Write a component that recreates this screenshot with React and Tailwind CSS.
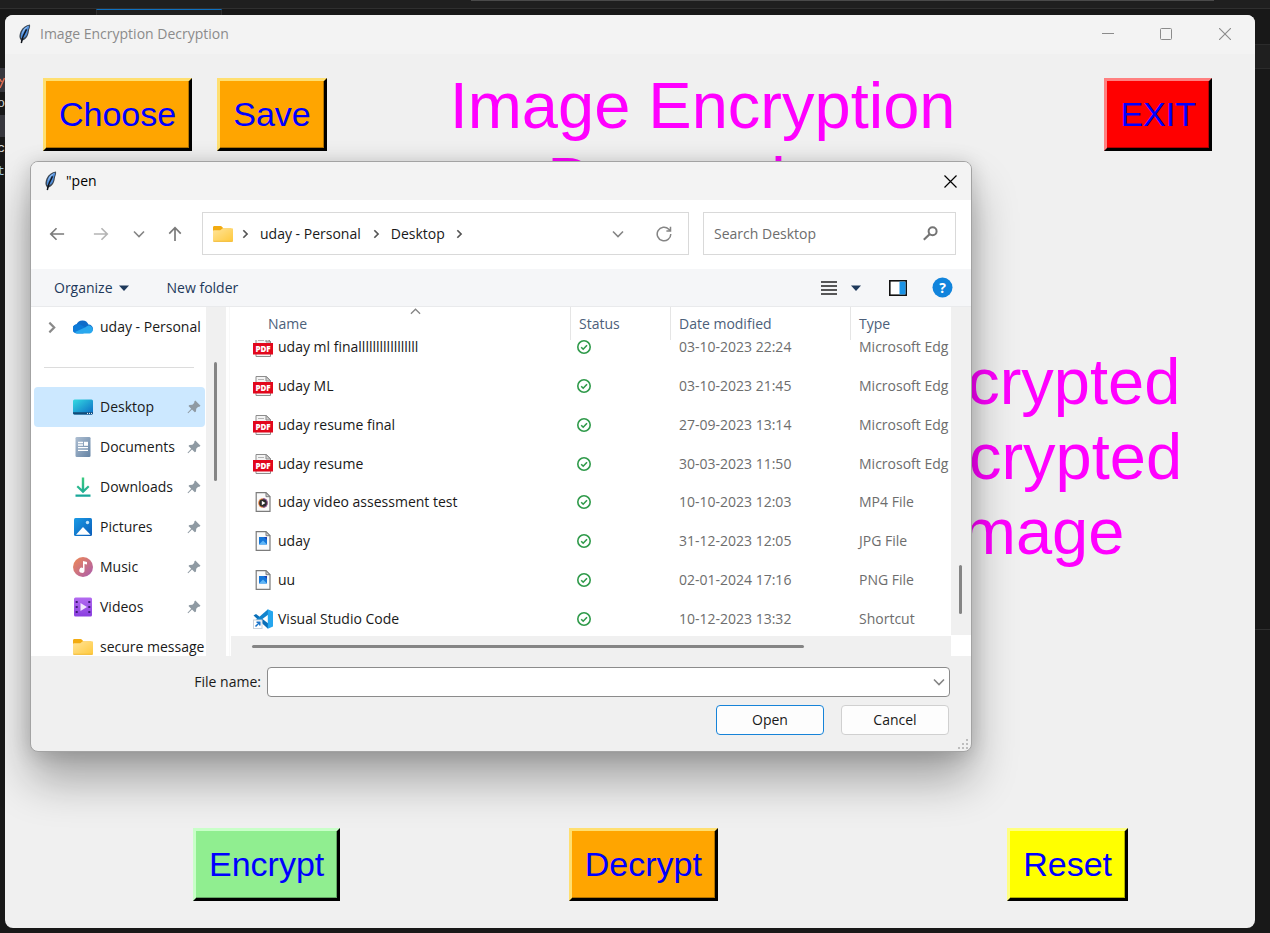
import React from "react";

function Feather() {
  return (
    <svg width="14" height="20" viewBox="0 0 14 20" aria-hidden="true">
      <path d="M12 .6C8 1.200 4.300 3.600 2.600 7.400c-1 2.500-1.500 5-.8 6.900L3 16.500 3.200 19.500l1-2.900c2.400-.7 4-2.200 5.200-4.300.9-1.700 1.200-3.200 1.400-4.800C11.200 5 12.600 3 12 .6z" fill="#3b4652" />
      <path d="M11.200 1.500C8 2.400 5 4.600 3.800 7.900c-.8 2.100-1.100 4-.8 5.600L4 14.500c2.300-.7 3.800-1.900 4.700-3.600.9-1.800.9-3.200 1.300-4.800.3-1.200 1.500-3 1.200-4.600z" fill="#4f8edb" />
      <path d="M10.600 1.900C8 3 5.600 4.800 4.600 7.700L3.700 11c1-1.800 2-3.900 3.200-5.400C8 4.200 9.500 3 10.600 1.900z" fill="#a5c9f3" />
      <path d="M8.600 5.400C6.800 8.400 4.600 11.500 3.300 19" stroke="#10141b" strokeWidth="1.500" fill="none" />
    </svg>
  );
}

function Chevron({ dir = "down", size = 12, className = "text-[#858585]", w = 1.6 }) {
  const d = {
    down: "M1 3.500l5 5 5-5",
    up: "M1 8.500l5-5 5 5",
    right: "M4 1.500L8.500 6 4 10.500",
  }[dir];
  return (
    <svg width={size} height={size} viewBox="0 0 12 12" className={className} aria-hidden="true">
      <path d={d} fill="none" stroke="currentColor" strokeWidth={w} />
    </svg>
  );
}

function Arrow({ kind }) {
  const d = {
    back: "M17 9H2M8.500 2.500L2 9l6.500 6.500",
    forward: "M1 9h15M9.500 2.500L16 9l-6.500 6.500",
    up: "M9 17V2M2.500 8.500L9 2l6.500 6.500",
  }[kind];
  return (
    <svg width="16" height="16" viewBox="0 0 18 18" aria-hidden="true">
      <path d={d} fill="none" stroke="currentColor" strokeWidth="1.900" />
    </svg>
  );
}

function Triangle() {
  return (
    <svg width="10" height="6" viewBox="0 0 10 6" aria-hidden="true">
      <path d="M0 .5h10L5 6z" fill="#1e395b" />
    </svg>
  );
}

function Folder() {
  return (
    <svg width="20" height="18" viewBox="0 0 20 18" aria-hidden="true">
      <defs>
        <linearGradient id="fold" x1="0" y1="0" x2="1" y2="1">
          <stop offset="0" stopColor="#ffe49a" />
          <stop offset="1" stopColor="#ffc93c" />
        </linearGradient>
      </defs>
      <path d="M0 2.500C0 1.500.6 1 1.500 1h6c.7 0 1 .2 1.500.8L10.500 3.500H18v3H0z" fill="#f2ab11" />
      <path d="M0 6.500c0-.8.500-1.200 1.200-1.200h6L9.800 3.300h9c.7 0 1.200.500 1.200 1.200V15.600c0 .8-.5 1.200-1.200 1.200H1.200C.5 16.800 0 16.400 0 15.600z" fill="url(#fold)" />
      <path d="M.3 16.300h19.400" stroke="#f0b429" strokeWidth=".8" />
    </svg>
  );
}

function Cloud() {
  return (
    <svg width="20" height="14" viewBox="0 0 20 14" aria-hidden="true">
      <path d="M4.500 13A4.400 4.400 0 0 1 3.500 4.300 6.500 6.500 0 0 1 15.500 4.600a4.200 4.200 0 0 1 .5 8.400z" fill="#0f6cc9" />
      <path d="M3.500 4.400c2-.6 4 0 5.500 1L17 10 10 13.500H4.500A4.500 4.500 0 0 1 3.500 4.400z" fill="#0c7ad8" />
      <path d="M2 12L12.500 7.200c2-1.500 4-2.200 5.500-.9 2.800 2 2.400 6.400-1.300 7.200H4.500C3.500 13.500 2.500 12.800 2 12z" fill="#29a8ee" />
    </svg>
  );
}

function DesktopIcon() {
  return (
    <svg width="20" height="16" viewBox="0 0 20 16" aria-hidden="true">
      <defs>
        <linearGradient id="desk" x1="0" y1="0" x2="1" y2="1">
          <stop offset="0" stopColor="#34dbe2" />
          <stop offset="1" stopColor="#0b69c4" />
        </linearGradient>
      </defs>
      <rect y=".5" width="20" height="15" rx="1.500" fill="url(#desk)" />
      <path d="M0 13.300h20v.8c0 .8-.6 1.400-1.400 1.400H1.400C.6 15.500 0 14.900 0 14.100z" fill="#134a76" />
      <path d="M14 14.400h1M16 14.400h1M18 14.400h1" stroke="#fff" strokeWidth="1" />
    </svg>
  );
}

function DocumentsIcon() {
  return (
    <svg width="20" height="20" viewBox="0 0 20 20" aria-hidden="true">
      <defs>
        <linearGradient id="docs" x1="0" y1="0" x2="1" y2="1">
          <stop offset="0" stopColor="#aebfd2" />
          <stop offset="1" stopColor="#6483a4" />
        </linearGradient>
      </defs>
      <rect x="2.500" width="15" height="20" rx="1.300" fill="url(#docs)" />
      <path d="M5 5.500h5M5 8h5M5 10.700h10M5 13.300h10" stroke="#fff" strokeWidth="1.300" />
      <rect x="11" y="4.800" width="4" height="4" fill="#fff" />
    </svg>
  );
}

function DownloadsIcon() {
  return (
    <svg width="20" height="20" viewBox="0 0 20 20" aria-hidden="true">
      <defs>
        <linearGradient id="down" x1="0" y1="0" x2="0" y2="1">
          <stop offset="0" stopColor="#3ccb80" />
          <stop offset="1" stopColor="#17a59b" />
        </linearGradient>
      </defs>
      <path d="M8.800.500h2.400v11.500l3.800-3.500L16.500 10 10 16.300 3.500 10 5 8.500l3.800 3.500zM2.500 17.600h15v2.200h-15z" fill="url(#down)" />
    </svg>
  );
}

function PicturesIcon() {
  return (
    <svg width="20" height="20" viewBox="0 0 20 20" aria-hidden="true">
      <defs>
        <linearGradient id="pics" x1="0" y1="0" x2="1" y2="1">
          <stop offset="0" stopColor="#1a9be6" />
          <stop offset="1" stopColor="#0a5cb8" />
        </linearGradient>
      </defs>
      <rect x="1" y="1" width="18" height="18" rx="1.500" fill="url(#pics)" />
      <path d="M3 17.700L10 10l7.500 7.700z" fill="#fff" />
      <circle cx="14.500" cy="5.500" r="1.700" fill="#bfe3fb" />
    </svg>
  );
}

function MusicIcon() {
  return (
    <svg width="20" height="20" viewBox="0 0 20 20" aria-hidden="true">
      <defs>
        <linearGradient id="mus" x1="0" y1="0" x2="1" y2="1">
          <stop offset="0" stopColor="#f08a52" />
          <stop offset="1" stopColor="#a95bb0" />
        </linearGradient>
      </defs>
      <circle cx="10" cy="10" r="10" fill="url(#mus)" />
      <path d="M10 4l4 .9v2.600l-2.500-.6v6.300a2.600 2.600 0 1 1-1.500-2.300z" fill="#fff" />
    </svg>
  );
}

function VideosIcon() {
  return (
    <svg width="20" height="20" viewBox="0 0 20 20" aria-hidden="true">
      <defs>
        <linearGradient id="vid" x1="0" y1="0" x2="0" y2="1">
          <stop offset="0" stopColor="#b36bf0" />
          <stop offset="1" stopColor="#8a3fe0" />
        </linearGradient>
      </defs>
      <rect x="1" y=".5" width="18" height="19" rx="1.500" fill="url(#vid)" />
      <path d="M2.700 4h2v2h-2zM2.700 9h2v2h-2zM2.700 14h2v2h-2zM15.300 4h2v2h-2zM15.300 9h2v2h-2zM15.300 14h2v2h-2z" fill="#3c1a78" />
      <path d="M7.500 6l6.500 4-6.500 4z" fill="#f1e6fd" />
    </svg>
  );
}

function Pin() {
  return (
    <svg width="14" height="14" viewBox="0 0 14 14" aria-hidden="true">
      <path d="M8.300.5L13.500 5.700 12 7 11.200 6.700 9.200 8.700 9 11.600 7.800 12.300 5 9.500 1.200 13.200.5 12.700 4.200 8.700 1.500 6 2.400 4.900 5.400 4.700 7.400 2.800 7 1.900z" fill="#8f9aa3" />
    </svg>
  );
}

function PdfIcon() {
  return (
    <svg width="20" height="20" viewBox="0 0 20 20" aria-hidden="true">
      <path d="M3 .5h10.500L17.500 4.500v15H3z" fill="#f4f4f4" stroke="#8d8d8d" />
      <path d="M5 3.500h6" stroke="#b5b5b5" />
      <path d="M13 .5v4.500h4.500z" fill="#d5d5d5" stroke="#8d8d8d" />
      <rect y="6" width="20" height="11.500" fill="#e2071c" />
      <text x="10" y="14.600" textAnchor="middle" fontFamily="Open Sans, sans-serif" fontSize="8" fontWeight="800" fill="#fff">PDF</text>
    </svg>
  );
}

function FileSheet({ children }) {
  return (
    <svg width="20" height="20" viewBox="0 0 20 20" aria-hidden="true">
      <path d="M3.200.7H13L17 4.700V19.300H3.200z" fill="#fafafa" stroke="#7c7c7c" strokeWidth="1.200" />
      <path d="M13 .7v4h4z" fill="#d0d0d0" stroke="#7c7c7c" />
      {children}
    </svg>
  );
}

function VideoFileIcon() {
  return (
    <FileSheet>
      <circle cx="10" cy="11" r="4.800" fill="#e8803f" />
      <path d="M10 6.200a4.800 4.800 0 0 1 0 9.600z" fill="#8658a5" />
      <circle cx="10" cy="11" r="3.800" fill="#2b2b2b" />
      <path d="M8.800 8.800l3.600 2.200-3.600 2.200z" fill="#fff" />
    </FileSheet>
  );
}

function ImageFileIcon() {
  return (
    <FileSheet>
      <rect x="6" y="6" width="8" height="7.500" fill="#1677d8" />
      <path d="M6 13.500l4-4 4 4z" fill="#5fb6f7" />
      <path d="M11 6h3v3z" fill="#1d3fb5" />
    </FileSheet>
  );
}

function CodeIcon() {
  return (
    <svg width="20" height="20" viewBox="0 0 20 20" aria-hidden="true">
      <path d="M.5 6.600L3 4.900 15 14.200V19.700z" fill="#0a6fb8" />
      <path d="M.5 13L2.800 15 15 5.800V.3z" fill="#1183cd" />
      <path d="M14.800.2L20 2.400V17.600L14.800 19.800z" fill="#25a6ee" />
      <rect x=".5" y="11" width="8.500" height="8.500" fill="#fff" stroke="#c8d2dc" />
      <path d="M2.500 17.500L6.300 13.700M3.500 13.200h3.300v3.300" fill="none" stroke="#1b74c9" strokeWidth="1.500" />
    </svg>
  );
}

function StatusIcon() {
  return (
    <svg width="14" height="14" viewBox="0 0 14 14" role="img" aria-label="Synced">
      <circle cx="7" cy="7" r="6.200" fill="#fff" stroke="#2f9a4a" strokeWidth="1.600" />
      <path d="M4.200 7.200l2 2L10 5.300" fill="none" stroke="#2f9a4a" strokeWidth="1.600" />
    </svg>
  );
}

function Raised({ children, className }) {
  return (
    <button
      type="button"
      className={
        "h-[73px] border-[3px] border-r-black border-b-black px-[13px] pb-[2px] font-['Liberation_Sans',sans-serif] text-[34px] leading-[40px] whitespace-nowrap text-[#0000ff] shadow-[inset_-1px_-1px_0_rgba(0,0,0,0.3)] " +
        className
      }
    >
      {children}
    </button>
  );
}

const orange = "border-t-[#ffdf70] border-l-[#ffdf70] bg-[#ffa500]";

const places = [
  ["Desktop", DesktopIcon],
  ["Documents", DocumentsIcon],
  ["Downloads", DownloadsIcon],
  ["Pictures", PicturesIcon],
  ["Music", MusicIcon],
  ["Videos", VideosIcon],
  ["secure message", Folder],
];

const files = [
  ["uday ml finalllllllllllllllll", PdfIcon, "03-10-2023 22:24", "Microsoft Edg"],
  ["uday ML", PdfIcon, "03-10-2023 21:45", "Microsoft Edg"],
  ["uday resume final", PdfIcon, "27-09-2023 13:14", "Microsoft Edg"],
  ["uday resume", PdfIcon, "30-03-2023 11:50", "Microsoft Edg"],
  ["uday video assessment test", VideoFileIcon, "10-10-2023 12:03", "MP4 File"],
  ["uday", ImageFileIcon, "31-12-2023 12:05", "JPG File"],
  ["uu", ImageFileIcon, "02-01-2024 17:16", "PNG File"],
  ["Visual Studio Code", CodeIcon, "10-12-2023 13:32", "Shortcut"],
];

const cols = "grid-cols-[340px_100px_180px_1fr]";

function Sidebar() {
  return (
    <nav aria-label="Places" className="flex w-[200px] shrink-0 overflow-hidden">
      <ul className="w-[175px] overflow-hidden pl-[3px]">
        <li className="flex h-10 items-center">
          <button type="button" aria-label="Expand" className="ml-[11px] flex w-7">
            <Chevron dir="right" size={13} w={2} className="text-[#8a8a8a]" />
          </button>
          <a href="#personal" className="flex items-center gap-[7px] whitespace-nowrap">
            <Cloud />
            uday - Personal
          </a>
        </li>
        <li className="flex h-10 items-center pr-3 pl-[10px]">
          <span className="h-px w-full bg-[#dcdcdc]" />
        </li>
        {places.map(([name, Icon], i) => (
          <li
            key={name}
            className={"mr-px flex h-10 items-center rounded-sm pr-1 pl-[39px] " + (i === 0 ? "bg-[#cce8ff]" : "")}
          >
            <a href="#place" className="flex flex-1 items-center gap-[7px] whitespace-nowrap">
              <Icon />
              {name}
            </a>
            {i < 6 && <Pin />}
          </li>
        ))}
      </ul>
      <div className="w-5 bg-[#f0f0f0] pt-[55px]">
        <div className="ml-2 h-[119px] w-[3px] rounded-full bg-[#858585]" />
      </div>
      <div className="ml-[3px] w-px bg-[#f8f8f8]" />
    </nav>
  );
}

function FileList() {
  return (
    <div className="flex min-w-0 flex-1 bg-white">
      <div className="flex min-w-0 flex-1 flex-col">
        <div className="flex-1 overflow-hidden">
          <table className="block">
            <thead className="relative z-10 block bg-white text-[#4c607a]">
              <tr className={"grid h-[33px] " + cols}>
                <th className="relative flex items-center border-r border-[#e5e5e5] pl-[37px] font-normal">
                  Name
                  <span className="absolute -top-px left-[179px]">
                    <Chevron dir="up" size={11} w={1.4} />
                  </span>
                </th>
                <th className="flex items-center border-r border-[#e5e5e5] pl-2 font-normal">Status</th>
                <th className="flex items-center border-r border-[#e5e5e5] pl-2 font-normal">Date modified</th>
                <th className="flex items-center pl-2 font-normal">Type</th>
              </tr>
            </thead>
            <tbody className="-mt-3 grid h-[310px] auto-rows-fr">
              {files.map(([name, Icon, date, type]) => (
                <tr key={name} className={"grid " + cols}>
                  <td className="flex items-center gap-[5px] pl-[22px] whitespace-nowrap">
                    <Icon />
                    {name}
                  </td>
                  <td className="flex items-center pl-[6px]">
                    <StatusIcon />
                  </td>
                  <td className="flex items-center pl-2 text-[#6d6d6d]">{date}</td>
                  <td className="flex items-center overflow-hidden pl-2 whitespace-nowrap text-[#6d6d6d]">{type}</td>
                </tr>
              ))}
            </tbody>
          </table>
        </div>
        <div className="flex h-5 items-center bg-[#f0f0f0] pl-[21px]">
          <div className="h-[3px] w-[552px] rounded-full bg-[#858585]" />
        </div>
      </div>
      <div className="w-5 pb-[21px]">
        <div className="h-full bg-[#f0f0f0] pt-[258px]">
          <div className="ml-2 h-[49px] w-[3px] rounded-full bg-[#858585]" />
        </div>
      </div>
    </div>
  );
}

function OpenDialog() {
  return (
    <section
      role="dialog"
      aria-label="Open"
      className="absolute top-[161px] left-[30px] z-20 flex w-[942px] flex-col overflow-hidden rounded-lg border border-[#a3a3a3] bg-[#f0f0f0] text-[14px] leading-5 text-[#191919] shadow-[0_28px_46px_rgba(0,0,0,0.32),0_2px_20px_rgba(0,0,0,0.16)]"
    >
      <header className="flex h-[38px] items-center bg-[#f3f3f3] pr-[14px] pl-[13px] text-black">
        <Feather />
        <h2 className="ml-2 flex-1">"pen</h2>
        <button type="button" aria-label="Close">
          <svg width="13" height="13" viewBox="0 0 13 13">
            <path d="M.5.5l12 12M12.500.5l-12 12" stroke="#000" strokeWidth="1.200" />
          </svg>
        </button>
      </header>

      <div className="flex h-[69px] items-center bg-white pr-[15px] pb-[2px] pl-[18px]">
        <button type="button" aria-label="Back" className="text-[#7a7a7a]"><Arrow kind="back" /></button>
        <button type="button" aria-label="Forward" className="ml-7 text-[#b4b4b4]"><Arrow kind="forward" /></button>
        <button type="button" aria-label="Recent locations" className="ml-6"><Chevron size={12} /></button>
        <button type="button" aria-label="Up" className="ml-[22px] text-[#7a7a7a]"><Arrow kind="up" /></button>
        <div className="ml-[19px] flex h-[43px] flex-1 items-center border border-[#d9d9d9] pr-4 pl-[10px]">
          <Folder />
          <Chevron dir="right" size={10} w={2} className="ml-[7px] text-[#555]" />
          <a href="#personal" className="ml-[10px] whitespace-nowrap">uday - Personal</a>
          <Chevron dir="right" size={10} w={2} className="ml-[10px] text-[#555]" />
          <a href="#desktop" className="ml-[10px]">Desktop</a>
          <Chevron dir="right" size={10} w={2} className="ml-[9px] text-[#555]" />
          <button type="button" aria-label="Previous locations" className="ml-auto"><Chevron size={12} /></button>
          <button type="button" aria-label="Refresh" className="ml-8">
            <svg width="16" height="16" viewBox="0 0 16 16">
              <path d="M14.800 8A6.800 6.800 0 1 1 12.800 3.200L14.300 4.700M14.500.8v4.100h-4.100" fill="none" stroke="#858585" strokeWidth="1.500" />
            </svg>
          </button>
        </div>
        <div className="ml-[14px] flex h-[43px] w-[253px] items-center border border-[#d9d9d9] pr-[17px] pl-[10px]">
          <input aria-label="Search Desktop" placeholder="Search Desktop" className="min-w-0 flex-1 outline-none placeholder:text-[#6d6d6d]" />
          <svg width="15" height="15" viewBox="0 0 15 15" aria-hidden="true">
            <circle cx="9.600" cy="5.300" r="4" fill="none" stroke="#747474" strokeWidth="2" />
            <path d="M6.600 8.300L.8 13.800" stroke="#747474" strokeWidth="2.200" />
          </svg>
        </div>
      </div>

      <div className="flex h-[38px] items-center border-b border-[#e9eaec] bg-[#f5f6f8] pr-[18px] pl-[23px] text-[#1e395b]">
        <button type="button" className="flex items-center gap-[6px]">
          Organize
          <Triangle />
        </button>
        <button type="button" className="ml-[38px]">New folder</button>
        <button type="button" aria-label="Change view" className="ml-auto flex items-center gap-[14px]">
          <svg width="16" height="14" viewBox="0 0 16 14">
            <path d="M0 1h16M0 5h16M0 9h16M0 13h16" stroke="#222" strokeWidth="1.400" />
          </svg>
          <Triangle />
        </button>
        <button type="button" aria-label="Preview pane" className="ml-7">
          <svg width="18" height="16" viewBox="0 0 18 16">
            <rect x=".8" y=".8" width="16.400" height="14.400" fill="#fff" stroke="#111" strokeWidth="1.600" />
            <rect x="10.500" y="1.600" width="6" height="12.800" fill="#1a93e6" />
          </svg>
        </button>
        <button type="button" aria-label="Help" className="ml-[25px]">
          <svg width="21" height="21" viewBox="0 0 21 21">
            <circle cx="10.500" cy="10.500" r="10" fill="#1184dc" />
            <text x="10.500" y="15.500" textAnchor="middle" fontFamily="Open Sans, sans-serif" fontSize="14" fontWeight="700" fill="#fff">?</text>
          </svg>
        </button>
      </div>

      <div className="flex h-[349px] bg-white">
        <Sidebar />
        <FileList />
      </div>

      <form className="relative flex flex-col gap-2 pt-[11px] pb-4">
        <div className="flex items-center pr-[21px]">
          <label htmlFor="file-name" className="w-[236px] pr-[6px] text-right">File name:</label>
          <div className="flex h-[30px] flex-1 items-center rounded-sm border border-[#8b8b8b] bg-white pr-1">
            <input id="file-name" className="h-full min-w-0 flex-1 px-2 outline-none" />
            <button type="button" aria-label="Show file names"><Chevron size={12} /></button>
          </div>
        </div>
        <div className="flex justify-end gap-[17px] pr-[22px]">
          <button type="button" className="h-[30px] w-[108px] rounded border border-[#1683d8] bg-[#fdfdfd]">Open</button>
          <button type="button" className="h-[30px] w-[108px] rounded border border-[#d0d0d0] bg-[#fdfdfd]">Cancel</button>
        </div>
        <svg width="10" height="10" viewBox="0 0 10 10" className="absolute right-[3px] bottom-[2px]" aria-hidden="true">
          <path d="M8 0h2v2H8zM8 4h2v2H8zM8 8h2v2H8zM4 4h2v2H4zM4 8h2v2H4zM0 8h2v2H0z" fill="#bdbdbd" />
        </svg>
      </form>
    </section>
  );
}

export default function App() {
  return (
    <div className="relative flex min-h-screen flex-col overflow-hidden bg-[#181818] pt-[15px] pr-[15px] pb-[5px] pl-[5px] font-['Open_Sans','Noto_Sans',sans-serif]">
      <div aria-hidden="true" className="absolute inset-x-0 top-0 h-[9px] border-b border-[#2f2f2f] bg-[#1f1f1f]">
        <div className="ml-[471px] h-px w-[743px] bg-[#4a4a4a]" />
        <div className="absolute top-[9px] left-[96px] h-[6px] w-[126px] border-x border-t border-x-[#2f2f2f] border-t-[#0e70c0] bg-[#1f1f1f]" />
      </div>
      <div aria-hidden="true" className="absolute top-[44px] right-0 h-[25px] w-[15px] border-y border-[#2b2b2b] bg-[#1f1f1f]" />
      <div aria-hidden="true" className="absolute top-[629px] right-0 h-[304px] w-[15px] border-t border-[#2f2f2f]" />
      <div
        aria-hidden="true"
        className="absolute top-[68px] left-0 flex w-[5px] flex-col items-end overflow-hidden font-['Liberation_Mono',monospace] text-[13px] leading-[23px] text-[#d4d4d4]"
      >
        <div className="h-6 w-full bg-[#37373d]">
          <svg width="5" height="24" viewBox="0 0 5 24"><path d="M0 11l1.500 3M0 20L4.500 10" stroke="#e06c50" strokeWidth="1.500" /></svg>
        </div>
        <span>o</span>
        <span className="h-[22px] w-full bg-[#37373d]" />
        <span>c</span>
        <span className="text-[#9cc8e8]">t</span>
      </div>

      <main className="relative flex flex-1 flex-col overflow-hidden rounded-lg bg-[#f0f0f0]">
        <header className="flex h-[39px] shrink-0 items-center bg-[#f3f3f3] pr-6 pb-px pl-[13px] text-[#8b8b8b]">
          <Feather />
          <span className="ml-2 flex-1 text-[14px] leading-5">Image Encryption Decryption</span>
          <button type="button" aria-label="Minimize" className="flex">
            <svg width="12" height="12" viewBox="0 0 12 12"><path d="M0 5.500h12" stroke="currentColor" /></svg>
          </button>
          <button type="button" aria-label="Maximize" className="ml-[46px] flex">
            <svg width="12" height="12" viewBox="0 0 12 12"><rect x=".5" y=".5" width="11" height="11" rx="1" fill="none" stroke="currentColor" /></svg>
          </button>
          <button type="button" aria-label="Close" className="ml-[47px] flex">
            <svg width="12" height="12" viewBox="0 0 12 12"><path d="M0 0l12 12M12 0L0 12" stroke="currentColor" strokeWidth="1.100" /></svg>
          </button>
        </header>

        <div className="flex items-start pt-6 pr-[43px] pl-[38px]">
          <Raised className={orange}>Choose</Raised>
          <Raised className={"ml-[25px] " + orange}>Save</Raised>
          <h1 className="-mt-[10px] flex-1 pr-[26px] text-center font-['Liberation_Sans',sans-serif] text-[65px] leading-[75px] text-[#ff00ff]">
            Image Encryption Decryption
          </h1>
          <Raised className="border-t-[#ff8080] border-l-[#ff8080] bg-[#ff0000]">EXIT</Raised>
        </div>

        <div className="flex flex-1 justify-end pt-[126px] pr-[70px]">
          <p className="w-[302px] text-center font-['Liberation_Sans',sans-serif] text-[65px] leading-[75px] text-[#ff00ff]">
            Encrypted Decrypted Image
          </p>
        </div>

        <div className="grid grid-cols-[auto_226fr_auto_286fr_auto] pr-[127px] pb-[27px] pl-[188px]">
          <Raised className="border-t-[#c8ffc8] border-l-[#c8ffc8] bg-[#90ee90]">Encrypt</Raised>
          <Raised className={"col-start-3 " + orange}>Decrypt</Raised>
          <Raised className="col-start-5 border-t-[#ffff80] border-l-[#ffff80] bg-[#ffff00]">Reset</Raised>
        </div>
      </main>

      <OpenDialog />
    </div>
  );
}
